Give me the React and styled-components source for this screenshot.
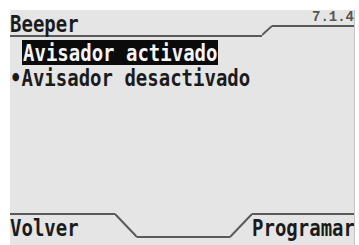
import styled, { createGlobalStyle } from "styled-components";

const GlobalStyle = createGlobalStyle`
    html, body {
        margin: 0;
        padding: 0;
        background: #ffffff;
    }
`

const App = () => {
    return (
        <>
            <GlobalStyle />
            <Screen>
                <Header>
                    <TitleBox>
                        <LcdText>Beeper</LcdText>
                    </TitleBox>
                    <svg width="10" height="11" viewBox="0 0 10 11">
                        <line x1="0" y1="10" x2="10" y2="1" stroke="#5a5a5a" strokeWidth="2" />
                    </svg>
                    <MenuCode>7.1.4</MenuCode>
                </Header>

                <Menu>
                    <MenuRow selected>
                        <LcdText>Avisador activado</LcdText>
                    </MenuRow>
                    <MenuRow>
                        <LcdText>•Avisador desactivado</LcdText>
                    </MenuRow>
                </Menu>

                <Footer>
                    <SoftKey width="105px">
                        <LcdText>Volver</LcdText>
                    </SoftKey>
                    <svg width="22" height="25" viewBox="0 0 22 25">
                        <line x1="0" y1="1" x2="22" y2="24" stroke="#5a5a5a" strokeWidth="2" />
                    </svg>
                    <Notch />
                    <svg width="22" height="25" viewBox="0 0 22 25">
                        <line x1="0" y1="24" x2="22" y2="1" stroke="#5a5a5a" strokeWidth="2" />
                    </svg>
                    <SoftKey align="right">
                        <LcdText>Programar</LcdText>
                    </SoftKey>
                </Footer>
            </Screen>
        </>
    )
}

const Screen = styled.div`
    margin: 10px 0 0 10px;
    width: 344px;
    height: 235px;
    background-color: #e5e5e5;
    border-right: 1px solid #c4c4c4;
    display: flex;
    flex-direction: column;
    overflow: hidden;
`
const LcdText = styled.span`
    display: inline-block;
    font-family: "DejaVu Sans Mono", monospace;
    font-weight: 700;
    font-size: 19px;
    line-height: 20px;
    white-space: pre;
    transform: scaleY(1.25);
    transform-origin: top left;
`
const Header = styled.header`
    display: flex;
    align-items: flex-end;
    height: 26px;
    color: #1b1b1b;
`
const TitleBox = styled.div`
    width: 252px;
    height: 24px;
    border-bottom: 2px solid #5a5a5a;
    margin-bottom: -1px;
`
const MenuCode = styled.div`
    flex: 1;
    align-self: flex-start;
    height: 15px;
    border-bottom: 2px solid #5a5a5a;
    text-align: right;
    font-family: "Liberation Mono", monospace;
    font-weight: 700;
    font-size: 14px;
    line-height: 15px;
    color: #555555;
`
const Menu = styled.main`
    flex: 1;
    padding-top: 4px;
    display: flex;
    flex-direction: column;
    align-items: flex-start;
`
const MenuRow = styled.div`
    height: 25px;
    margin-left: ${props => props.selected ? "12px" : "0"};
    padding: 0 ${props => props.selected ? "1px" : "0"};
    background-color: ${props => props.selected ? "#0b0b0b" : "transparent"};
    color: ${props => props.selected ? "#f4f4f4" : "#1b1b1b"};
    overflow: hidden;
`
const Footer = styled.footer`
    display: flex;
    align-items: flex-start;
    height: 32px;
    margin-top: -1px;
    color: #1b1b1b;
`
const SoftKey = styled.div`
    width: ${props => props.width || "auto"};
    flex: ${props => props.width ? "none" : "1"};
    height: 30px;
    border-top: 2px solid #5a5a5a;
    text-align: ${props => props.align || "left"};
    overflow: hidden;
`
const Notch = styled.div`
    width: 93px;
    margin-top: 23px;
    border-top: 2px solid #5a5a5a;
`

export default App;
